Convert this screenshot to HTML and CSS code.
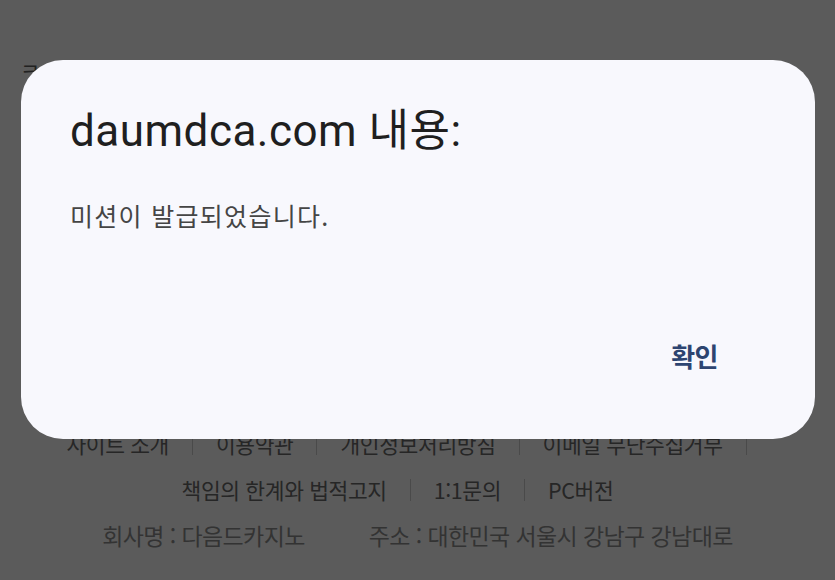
FILE: index.html
```html
<!DOCTYPE html>
<html lang="ko">
<head>
<meta charset="utf-8">
<link rel="stylesheet" href="styles.css">
</head>
<body>
<div class="page">
  <div class="top-glyph">ㅋ</div>
  <footer class="footer">
    <nav class="links row1">
      <span>사이트 소개</span><i class="sep"></i>
      <span>이용약관</span><i class="sep"></i>
      <span>개인정보처리방침</span><i class="sep"></i>
      <span>이메일 무단수집거부</span><i class="sep"></i>
    </nav>
    <nav class="links row2">
      <span>책임의 한계와 법적고지</span><i class="sep"></i>
      <span>1:1문의</span><i class="sep"></i>
      <span>PC버전</span>
    </nav>
    <div class="company">
      <span>회사명 : 다음드카지노</span>
      <span>주소 : 대한민국 서울시 강남구 강남대로</span>
    </div>
  </footer>
</div>
<div class="dialog" role="alertdialog">
  <h1 class="title">daumdca.com 내용:</h1>
  <p class="message">미션이 발급되었습니다.</p>
  <div class="actions"><button class="ok">확인</button></div>
</div>
</body>
</html>
```
FILE: styles.css
```css
html, body {
  margin: 0;
  padding: 0;
}
body {
  width: 835px;
  height: 580px;
  overflow: hidden;
  background: #5b5b5b;
  font-family: "Noto Sans CJK KR", "Noto Sans", sans-serif;
  position: relative;
}
.page {
  height: 580px;
  display: flex;
  flex-direction: column;
}
.top-glyph {
  margin: 56px 0 0 20px;
  font-size: 22px;
  line-height: 26px;
  color: #222;
}
.footer {
  margin-top: 348px;
  display: flex;
  flex-direction: column;
  gap: 18px;
  color: #262626;
  font-size: 21.5px;
  line-height: 28px;
  letter-spacing: -0.4px;
}
.links {
  display: flex;
  align-items: center;
  justify-content: center;
  gap: 23px;
}
.row1 {
  padding-right: 22px;
}
.row2 {
  padding-right: 40px;
}
.sep {
  display: block;
  width: 1px;
  height: 22px;
  background: #4a4a4a;
}
.company {
  display: flex;
  justify-content: center;
  gap: 64px;
  color: #333;
  font-size: 23px;
  letter-spacing: -0.6px;
  margin-top: -1px;
}
.dialog {
  position: absolute;
  left: 21px;
  top: 60px;
  width: 794px;
  height: 379px;
  box-sizing: border-box;
  border-radius: 42px;
  background: #f8f8fd;
  padding: 46px 49px 0 49px;
  display: flex;
  flex-direction: column;
}
.title {
  margin: 0;
  font-family: "Roboto", "Noto Sans CJK KR", sans-serif;
  font-weight: 400;
  font-size: 44px;
  line-height: 50px;
  color: #1f1f1f;
  letter-spacing: 0.5px;
}
.message {
  margin: 43px 0 0 0;
  font-size: 25px;
  line-height: 32px;
  color: #454545;
  letter-spacing: 1.3px;
}
.actions {
  display: flex;
  justify-content: flex-end;
  margin-top: 110px;
  padding-right: 48px;
}
.ok {
  border: 0;
  background: none;
  padding: 0;
  font-family: "Noto Sans CJK KR", sans-serif;
  font-size: 26px;
  font-weight: 700;
  line-height: 30px;
  letter-spacing: -0.5px;
  color: #2d4470;
}
```
